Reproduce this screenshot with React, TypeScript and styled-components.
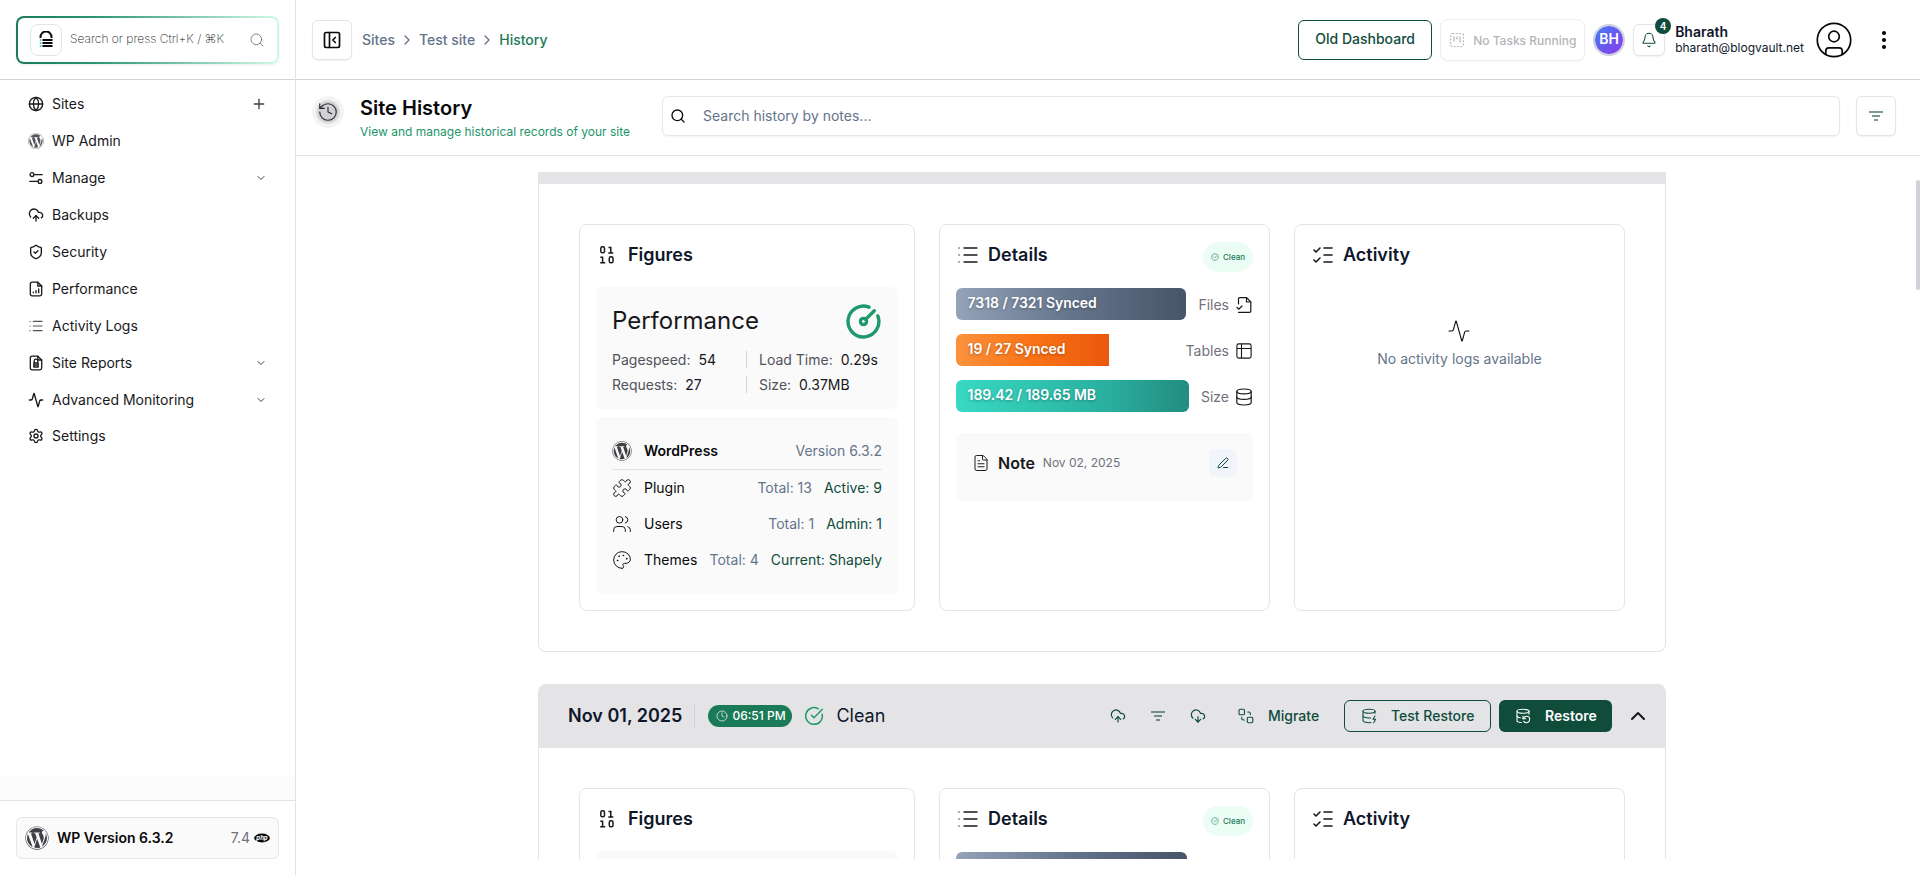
import React from 'react';
import styled, { createGlobalStyle, css } from 'styled-components';
import {
  Globe, Plus, ChevronDown, ChevronRight, ChevronUp, CloudUpload, CloudDownload, ShieldCheck, List,
  Activity, Settings, Search, PanelLeftClose, Bell, History, CircleGauge, Puzzle, Users, Palette,
  ListChecks, FileText, Database, PenLine, Clock, CircleCheckBig, DatabaseZap, DatabaseBackup,
  EllipsisVertical,
} from 'lucide-react';
import { FaWordpress } from 'react-icons/fa';

const Global = createGlobalStyle`
  *, *::before, *::after { box-sizing: border-box; }
  body { margin: 0; background: #fff; font-family: Inter, "Liberation Sans", sans-serif; font-size: 14px; line-height: 20px; color: #09090b; -webkit-font-smoothing: antialiased; }
  button, input { font: inherit; margin: 0; }
  svg { display: block; flex: none; }
`;

const Page = styled.div`
  display: grid;
  grid-template-columns: 296px minmax(0, 1fr);
  width: 100%;
  height: 875px;
  overflow: hidden;
`;

const Sidebar = styled.aside`
  display: flex;
  flex-direction: column;
  border-right: 1px solid #e2e2ea;
`;
const SearchArea = styled.div`
  height: 80px;
  padding: 16px;
  border-bottom: 1px solid #d4d4d8;
`;
const QuickSearch = styled.div`
  display: flex;
  align-items: center;
  height: 48px;
  padding: 0 12px;
  border: 2px solid transparent;
  border-radius: 8px;
  background: linear-gradient(#fff, #fff) padding-box, linear-gradient(90deg, #1b7a57, #2c9673 30%, #d1fae5) border-box;
  box-shadow: 0 1px 3px rgba(0, 0, 0, 0.08);
  span { flex: 1; margin: -2px 0 0 8px; font-size: 12px; font-weight: 200; color: #18181b; white-space: nowrap; }
`;
const LogoBox = styled.div`
  display: grid;
  place-items: center;
  width: 32px;
  height: 32px;
  border: 1px solid #e4e4e7;
  border-radius: 8px;
`;
const Nav = styled.nav`
  flex: 1;
  padding: 5px 24px 0 28px;
  display: flex;
  flex-direction: column;
`;
const NavItem = styled.a<{ $last?: boolean }>`
  display: flex;
  align-items: center;
  height: ${(p) => (p.$last ? 36 : 37)}px;
  gap: 8px;
  color: #18181b;
  span { flex: 1; }
`;
const NavAction = styled.i`
  display: flex;
  margin-right: 4px;
  color: #3f3f46;
`;
const Fade = styled.div`
  height: 24px;
  background: #fcfcfc;
`;
const SidebarFooter = styled.div`
  height: 75px;
  padding: 16px;
  border-top: 1px solid #e4e4e7;
`;
const VersionBox = styled.div`
  display: flex;
  align-items: center;
  height: 42px;
  padding: 0 8px;
  border: 1px solid #e2e8f0;
  border-radius: 6px;
  background: #fafafa;
  color: #3f3f46;
  b { flex: 1; margin-left: 8px; font-weight: 600; color: #09090b; }
  span { margin-right: 4px; color: #71717a; }
`;

const Main = styled.main`
  display: flex;
  flex-direction: column;
  min-width: 0;
  height: 875px;
`;
const TopBar = styled.header`
  display: flex;
  align-items: center;
  height: 80px;
  flex: none;
  padding: 0 24px 0 16px;
  border-bottom: 1px solid #d4d4d8;
`;
const IconButton = styled.button<{ $size: number; $tone?: string }>`
  position: relative;
  display: grid;
  place-items: center;
  flex: none;
  width: ${(p) => p.$size}px;
  height: ${(p) => p.$size}px;
  padding: 0;
  border: 1px solid #e4e4e7;
  border-radius: 6px;
  background: #fff;
  color: ${(p) => p.$tone ?? '#09090b'};
  box-shadow: 0 1px 2px rgba(0, 0, 0, 0.06);
`;
const Crumbs = styled.div`
  display: flex;
  align-items: center;
  flex: 1;
  margin-left: 10px;
  font-weight: 500;
  color: #64748b;
  svg { margin: 0 4px; }
  b { font-weight: 500; color: #1b7a57; }
`;
const OutlineButton = styled.button`
  width: 134px;
  height: 40px;
  border: 1px solid #0f4c3a;
  border-radius: 6px;
  background: #fff;
  color: #0f4c3a;
  font-weight: 500;
  padding: 0 0 2px;
`;
const TaskButton = styled.button`
  display: flex;
  align-items: center;
  gap: 8px;
  width: 145px;
  height: 42px;
  margin: 0 8px;
  padding: 0 0 0 8px;
  border: 1px solid #eeeeef;
  border-radius: 8px;
  background: #fff;
  color: #b4b4b8;
  font-size: 12px;
  font-weight: 500;
  white-space: nowrap;
  box-shadow: 0 1px 2px rgba(0, 0, 0, 0.04);
  span { padding-top: 3px; }
`;
const Initials = styled.div`
  display: grid;
  place-items: center;
  width: 32px;
  height: 32px;
  margin-right: 8px;
  padding-bottom: 2px;
  border: 2px solid #cbd0dc;
  border-radius: 50%;
  background: linear-gradient(135deg, #3b82f6, #9333ea) border-box;
  background-clip: padding-box;
  color: #fff;
  font-weight: 600;
`;
const Badge = styled.span`
  position: absolute;
  top: -7px;
  right: -7px;
  width: 16px;
  height: 16px;
  border-radius: 50%;
  background: #0f4c3a;
  color: #fff;
  font-size: 10px;
  line-height: 16px;
  font-weight: 600;
  text-align: center;
`;
const Account = styled.div`
  margin: 0 12px 0 10px;
  font-size: 12px;
  line-height: 16px;
  color: #0f172a;
  b { display: block; font-size: 14px; font-weight: 600; }
`;
const MenuDots = styled.div`
  margin-left: 20px;
`;

const TitleBar = styled.section`
  display: flex;
  flex: none;
  height: 76px;
  padding: 16px 24px 0 16px;
  border-bottom: 1px solid #e4e4e7;
`;
const TitleIcon = styled.div`
  display: grid;
  place-items: center;
  width: 32px;
  height: 32px;
  border-radius: 50%;
  background: radial-gradient(circle, #d0d0d5 0 10px, #dedee2 11px, #f4f4f5 13px);
  color: #27272a;
`;
const TitleText = styled.div`
  width: 302px;
  margin: -2px 0 0 16px;
  h1 { margin: 0; font-size: 20px; line-height: 28px; font-weight: 600; color: #09090b; }
  p { margin: 2px 0 0; font-size: 12px; line-height: 16px; color: #1b9569; }
`;
const SearchField = styled.div`
  display: flex;
  align-items: center;
  flex: 1;
  height: 40px;
  margin-right: 16px;
  padding-left: 7px;
  gap: 17px;
  border: 1px solid #e2e8f0;
  border-radius: 6px;
  color: #64748b;
  box-shadow: 0 1px 2px rgba(0, 0, 0, 0.05);
  svg { color: #09090b; }
`;

const Scroller = styled.div`
  display: flex;
  flex-direction: column;
  align-items: center;
  justify-content: flex-start;
  gap: 32px;
  position: relative;
  height: 687px;
  margin-top: 16px;
  padding-right: 12px;
  overflow: hidden;
`;
const ScrollThumb = styled.div`
  position: absolute;
  right: 0;
  top: 8px;
  width: 4px;
  height: 110px;
  border-radius: 2px;
  background: #cfd1db;
`;
const Record = styled.article<{ $cut?: boolean }>`
  flex: none;
  width: 1128px;
  border: 1px solid #e4e4e7;
  border-top: 0;
  border-radius: ${(p) => (p.$cut ? '0 0 8px 8px' : '8px')};
  overflow: hidden;
`;
const RecordHead = styled.div<{ $cut?: boolean }>`
  display: flex;
  align-items: center;
  height: ${(p) => (p.$cut ? 12 : 64)}px;
  margin: 0 -1px;
  padding: 0 16px 0 30px;
  background: #e4e4e7;
  color: #0f172a;
  font-size: 18px;
  line-height: 24px;
`;
const DateText = styled.span`
  padding-right: 12px;
  border-right: 1px solid #d2d2d6;
  font-weight: 600;
`;
const TimePill = styled.span`
  display: flex;
  align-items: center;
  gap: 4px;
  width: 84px;
  height: 22px;
  margin: 0 12px 0 13px;
  padding-left: 8px;
  border-radius: 11px;
  background: #1b7a57;
  color: #fff;
  font-size: 12px;
  font-weight: 500;
  white-space: nowrap;
`;
const CleanText = styled.span`
  flex: 1;
  margin-left: 12px;
`;
const HeadIcons = styled.div`
  display: flex;
  gap: 24px;
  margin-right: 32px;
  color: #0f4c3a;
`;
const Action = styled.button<{ $kind: 'plain' | 'outline' | 'solid'; $w: number }>`
  display: flex;
  align-items: center;
  width: ${(p) => p.$w}px;
  height: 32px;
  gap: 14px;
  padding: 0 0 0 17px;
  border: 0;
  border-radius: 6px;
  background: none;
  color: #0f4c3a;
  font-size: 14px;
  font-weight: 500;
  white-space: nowrap;
  ${(p) => p.$kind === 'plain' && css`padding-left: 0;`}
  ${(p) => p.$kind === 'outline' && css`padding-left: 16px; border: 1px solid #0f4c3a;`}
  ${(p) => p.$kind === 'solid' && css`margin: 0 14px 0 8px; padding-left: 16px; background: #0f4c3a; color: #fff; font-weight: 600;`}
`;

const Columns = styled.div`
  display: grid;
  grid-template-columns: 336px 331px 331px;
  gap: 24px;
  padding: 40px;
`;
const Card = styled.section`
  height: 387px;
  padding: 16px;
  border: 1px solid #e4e4e7;
  border-radius: 8px;
  background: #fff;
`;
const CardHead = styled.div<{ $gap: number }>`
  display: flex;
  align-items: center;
  height: 28px;
  gap: ${(p) => p.$gap}px;
  color: #18181b;
  h2 { flex: 1; margin: 0; font-size: 18px; line-height: 28px; font-weight: 600; color: #0f172a; }
`;
const Indent = styled.span`
  margin-left: 3px;
`;
const Panel = styled.div<{ $h: number; $mt: number; $pt: number }>`
  height: ${(p) => p.$h}px;
  margin-top: ${(p) => p.$mt}px;
  padding: ${(p) => p.$pt}px 16px 0;
  border-radius: 6px;
  background: #fafafa;
`;
const PerfTitle = styled.div`
  display: flex;
  align-items: center;
  justify-content: space-between;
  height: 36px;
  font-size: 24px;
  line-height: 32px;
  color: #18181b;
  svg { color: #1f996b; }
`;
const Metrics = styled.div`
  display: grid;
  grid-template-columns: 134px 1fr;
  grid-auto-rows: 17px;
  row-gap: 8px;
  margin-top: 12px;
`;
const Metric = styled.div`
  display: flex;
  align-items: center;
  gap: 8px;
  color: #52525b;
  white-space: nowrap;
  b { font-weight: 400; color: #18181b; }
  &:nth-child(even) { padding-left: 12px; border-left: 1px solid #d4d4d8; }
`;
const StackRow = styled.div<{ $head?: boolean }>`
  display: flex;
  align-items: center;
  height: 36px;
  color: #18181b;
  ${(p) => p.$head && css`height: 39px; padding-top: 1px; border-bottom: 1px solid #e4e4e7;`}
  strong { flex: 1; margin-left: 12px; font-weight: ${(p) => (p.$head ? 600 : 400)}; color: #09090b; }
  span { color: #64748b; }
  em { margin-left: 12px; font-style: normal; color: #0f4c3a; }
`;
const CleanPill = styled.div`
  display: flex;
  align-items: center;
  gap: 4px;
  width: 50px;
  height: 30px;
  margin-top: 3px;
  padding-left: 8px;
  border-radius: 15px;
  background: #ecfdf5;
  color: #1b7a57;
  font-size: 8px;
  font-weight: 500;
`;
const Bars = styled.div`
  margin-top: 19px;
`;
const BarRow = styled.div`
  display: flex;
  align-items: center;
  height: 32px;
  margin-bottom: 14px;
  color: #71717a;
  svg { margin: 2px 1px 0 7px; color: #18181b; }
  label { padding: 2px 0 0 12px; }
`;
const Track = styled.div`
  flex: 1;
  height: 32px;
  border-radius: 6px;
  overflow: hidden;
`;
const tones = {
  slate: 'linear-gradient(90deg, #94a3b8, #64748b 50%, #475569)',
  orange: 'linear-gradient(90deg, #fb923c, #f97316 50%, #ea580c)',
  teal: 'linear-gradient(90deg, #38d9c3, #2bb3a2 60%, #238d82)',
};
const Fill = styled.div<{ $tone: keyof typeof tones }>`
  height: 32px;
  padding-left: 11.5px;
  line-height: 30px;
  background: ${(p) => tones[p.$tone]};
  color: #fff;
  font-weight: 600;
  letter-spacing: -0.003em;
  text-shadow: 0 1px 3px rgba(0, 0, 0, 0.3);
  white-space: nowrap;
`;
const FillPeek = styled.div`
  width: 231px;
  height: 32px;
  margin-top: 19px;
  border-radius: 6px;
  background: ${tones.slate};
`;
const NoteRow = styled.div`
  display: flex;
  align-items: center;
  height: 28px;
  color: #18181b;
  h3 { margin: 0 8px; font-size: 16px; font-weight: 600; }
  time { flex: 1; font-size: 12px; color: #71717a; }
`;
const EditButton = styled.button`
  display: grid;
  place-items: center;
  width: 28px;
  height: 28px;
  padding: 0;
  border: 0;
  border-radius: 6px;
  background: #f1f5f9;
  color: #0f4c3a;
`;
const Empty = styled.div`
  display: flex;
  flex-direction: column;
  align-items: center;
  gap: 6px;
  margin-top: 50px;
  color: #64748b;
  svg { margin-right: 2px; color: #09090b; }
`;

const LogoMark = () => (
  <svg width="14" height="18" viewBox="0 0 14 18" fill="none">
    <path d="M1.5 7V6a5.5 5.5 0 0 1 11 0v1" stroke="#09090b" strokeWidth="2" />
    <path d="M3.5 9h10M3.5 12h10M3.5 15h10" stroke="#09090b" strokeWidth="2" />
    <path d="M.8 9h1.6M.8 12h1.6M.8 15h1.6" stroke="#2bb3a2" strokeWidth="1.6" />
  </svg>
);
const FilterLines = ({ width = 2 }: { width?: number }) => (
  <svg width="16" height="16" viewBox="0 0 16 16" stroke="currentColor" strokeWidth={width} opacity=".55">
    <path d="M1 4h14M4 8h8M6 12h4" />
  </svg>
);
const ReportIcon = ({ kind }: { kind: 'chart' | 'lock' }) => (
  <svg width="16" height="16" viewBox="0 0 16 16" fill="none" stroke="currentColor" strokeWidth="1.3" strokeLinecap="round" strokeLinejoin="round">
    <path d="M9.8 1.2H4A1.7 1.7 0 0 0 2.3 2.9v10.2A1.7 1.7 0 0 0 4 14.8h8a1.7 1.7 0 0 0 1.7-1.7V5z" />
    <path d="M9.8 1.2V5h3.9" />
    {kind === 'chart'
      ? <path d="M5.3 11.8v-.7M8 11.8V9.6M10.7 11.8V8" />
      : <path d="M6.2 7.5V6a1.8 1.8 0 0 1 3.6 0v1.5M5.8 8h4.4v4H5.8zM5.8 10h4.4" />}
  </svg>
);
const ManageIcon = () => (
  <svg width="16" height="16" viewBox="0 0 16 16" fill="none" stroke="currentColor" strokeWidth="1.3" strokeLinecap="round">
    <circle cx="4" cy="4.6" r="1.9" /><path d="M6.5 4.6h7.8" />
    <circle cx="12" cy="11.4" r="1.9" /><path d="M1.8 11.4h7.8" />
  </svg>
);
const BinaryIcon = () => (
  <svg width="16" height="20" viewBox="0 0 16 20" fill="none" stroke="currentColor" strokeWidth="1.5">
    <rect x="1.8" y="1.8" width="3.7" height="6" rx="1.6" />
    <path d="M9.5 2.500h2.300v5.700M9.300 8h5M1.300 12.200h2.300v5.600M1.200 17.700h5" />
    <rect x="10.300" y="11.800" width="3.700" height="6" rx="1.600" />
  </svg>
);
const FileCheckIcon = () => (
  <svg width="16" height="16" viewBox="0 0 16 16" fill="none" stroke="currentColor" strokeWidth="1.2" strokeLinecap="round" strokeLinejoin="round">
    <path d="M2.500 7V1.800c0-.7.400-1.100 1.100-1.100h7L14.800 5v9c0 .8-.5 1.300-1.300 1.300H2.500" />
    <path d="M10.500.8V5h4.200M1 10.500l1.700 1.700L6 9" />
  </svg>
);
const GridIcon = () => (
  <svg width="16" height="16" viewBox="0 0 16 16" fill="none" stroke="currentColor" strokeWidth="1.1">
    <rect x=".9" y=".9" width="14.200" height="14.200" rx="1.800" />
    <path d="M5.500 1v14M1 5.500h14" />
  </svg>
);
const MigrateIcon = () => (
  <svg width="16" height="16" viewBox="0 0 16 16" fill="none" stroke="currentColor" strokeWidth="1.1" strokeLinecap="round">
    <rect x="1" y="1.200" width="5.500" height="5.500" rx="1.200" />
    <rect x="9.300" y="9.300" width="5.500" height="5.500" rx="1.200" />
    <path d="M9.800 4h.8a1.800 1.800 0 0 1 1.800 1.800v.7M6.300 12h-.8a1.800 1.800 0 0 1-1.800-1.800v-.8" />
  </svg>
);
const UserIcon = () => (
  <svg width="36" height="36" viewBox="0 0 36 36" fill="none" stroke="currentColor" strokeWidth="1.7">
    <circle cx="18" cy="18" r="16.700" />
    <circle cx="18" cy="14.500" r="5.300" />
    <path d="M9.800 32v-3.200a3 3 0 0 1 3-3h10.400a3 3 0 0 1 3 3V32" />
  </svg>
);
const TaskIcon = () => (
  <svg width="16" height="16" viewBox="0 0 16 16" fill="none" stroke="currentColor" strokeWidth="1.2">
    <rect x="1.500" y="1.500" width="13" height="13" rx="2" strokeDasharray="1.800 1.500" />
    <path d="M5 4.500v5M8 4.500v3M11 4.500v6" />
  </svg>
);
const PhpIcon = () => (
  <svg width="16" height="10" viewBox="0 0 16 10">
    <ellipse cx="8" cy="5" rx="7.900" ry="4.400" fill="#09090b" />
    <text x="8" y="6.800" textAnchor="middle" fontSize="6" fontWeight="700" fontStyle="italic" fill="#fff">php</text>
  </svg>
);

const navItems = [
  { label: 'Sites', icon: <Globe size={16} />, action: 'plus' },
  { label: 'WP Admin', icon: <FaWordpress size={16} color="#52525b" /> },
  { label: 'Manage', icon: <ManageIcon />, action: 'chevron' },
  { label: 'Backups', icon: <CloudUpload size={16} /> },
  { label: 'Security', icon: <ShieldCheck size={16} /> },
  { label: 'Performance', icon: <ReportIcon kind="chart" /> },
  { label: 'Activity Logs', icon: <List size={16} strokeWidth={1.8} color="#52525b" /> },
  { label: 'Site Reports', icon: <ReportIcon kind="lock" />, action: 'chevron' },
  { label: 'Advanced Monitoring', icon: <Activity size={16} />, action: 'chevron' },
  { label: 'Settings', icon: <Settings size={16} /> },
];

const stack = [
  { name: 'Plugin', icon: <Puzzle size={20} strokeWidth={1.2} />, total: 'Total: 13', extra: 'Active: 9' },
  { name: 'Users', icon: <Users size={20} strokeWidth={1.2} />, total: 'Total: 1', extra: 'Admin: 1' },
  { name: 'Themes', icon: <Palette size={20} strokeWidth={1.2} />, total: 'Total: 4', extra: 'Current: Shapely' },
];

const bars: { label: string; text: string; done: number; all: number; tone: keyof typeof tones; icon: React.ReactNode }[] = [
  { label: 'Files', text: '7318 / 7321 Synced', done: 7318, all: 7321, tone: 'slate', icon: <FileCheckIcon /> },
  { label: 'Tables', text: '19 / 27 Synced', done: 19, all: 27, tone: 'orange', icon: <GridIcon /> },
  { label: 'Size', text: '189.42 / 189.65 MB', done: 189.42, all: 189.65, tone: 'teal', icon: <Database strokeWidth={1.5} viewBox="2 1 20 22" width={16} height={18} /> },
];

const FiguresBody = () => (
  <>
    <Panel $h={122} $mt={18} $pt={16}>
      <PerfTitle>Performance<CircleGauge size={37} strokeWidth={2.2} /></PerfTitle>
      <Metrics>
        <Metric>Pagespeed: <b>54</b></Metric>
        <Metric>Load Time: <b>0.29s</b></Metric>
        <Metric>Requests: <b>27</b></Metric>
        <Metric>Size: <b>0.37MB</b></Metric>
      </Metrics>
    </Panel>
    <Panel $h={177} $mt={8} $pt={14}>
      <StackRow $head>
        <FaWordpress size={20} color="#3f3f46" />
        <strong>WordPress</strong>
        <span>Version 6.3.2</span>
      </StackRow>
      {stack.map((s) => (
        <StackRow key={s.name}>
          {s.icon}
          <strong>{s.name}</strong>
          <span>{s.total}</span>
          <em>{s.extra}</em>
        </StackRow>
      ))}
    </Panel>
  </>
);

const DetailsBody = () => (
  <>
    <Bars>
      {bars.map((b) => (
        <BarRow key={b.label}>
          <Track>
            <Fill $tone={b.tone} style={{ width: `${(b.done / b.all) * 100}%` }}>{b.text}</Fill>
          </Track>
          <label>{b.label}</label>
          {b.icon}
        </BarRow>
      ))}
    </Bars>
    <Panel $h={68} $mt={21} $pt={16}>
      <NoteRow>
        <FileText size={18} strokeWidth={1.3} />
        <h3>Note</h3>
        <time>Nov 02, 2025</time>
        <EditButton><PenLine size={12} /></EditButton>
      </NoteRow>
    </Panel>
  </>
);

const RecordBody = ({ peek }: { peek?: boolean }) => (
  <Columns>
    <Card>
      <CardHead $gap={13}>
        <Indent><BinaryIcon /></Indent>
        <h2>Figures</h2>
      </CardHead>
      {peek ? <Panel $h={122} $mt={18} $pt={16} /> : <FiguresBody />}
    </Card>
    <Card>
      <CardHead $gap={8}>
        <List size={24} strokeWidth={1.3} />
        <h2>Details</h2>
        <CleanPill><CircleCheckBig size={8} strokeWidth={1.8} />Clean</CleanPill>
      </CardHead>
      {peek ? <FillPeek /> : <DetailsBody />}
    </Card>
    <Card>
      <CardHead $gap={8}>
        <ListChecks size={24} strokeWidth={1.6} />
        <h2>Activity</h2>
      </CardHead>
      {!peek && (
        <Empty>
          <Activity size={24} strokeWidth={1.1} />
          No activity logs available
        </Empty>
      )}
    </Card>
  </Columns>
);

export default function App() {
  return (
    <>
      <Global />
      <Page>
        <Sidebar>
          <SearchArea>
            <QuickSearch>
              <LogoBox><LogoMark /></LogoBox>
              <span>Search or press Ctrl+K / ⌘K</span>
              <Search size={16} strokeWidth={1.3} color="#71717a" />
            </QuickSearch>
          </SearchArea>
          <Nav>
            {navItems.map((n) => (
              <NavItem key={n.label} $last={n.label === 'Settings'}>
                {n.icon}
                <span>{n.label}</span>
                {n.action === 'plus' && <NavAction><Plus size={16} /></NavAction>}
                {n.action === 'chevron' && <NavAction><ChevronDown size={12} /></NavAction>}
              </NavItem>
            ))}
          </Nav>
          <Fade />
          <SidebarFooter>
            <VersionBox>
              <FaWordpress size={24} />
              <b>WP Version 6.3.2</b>
              <span>7.4</span>
              <PhpIcon />
            </VersionBox>
          </SidebarFooter>
        </Sidebar>
        <Main>
          <TopBar>
            <IconButton $size={40}><PanelLeftClose size={20} /></IconButton>
            <Crumbs>
              Sites<ChevronRight size={16} />Test site<ChevronRight size={16} /><b>History</b>
            </Crumbs>
            <OutlineButton>Old Dashboard</OutlineButton>
            <TaskButton><TaskIcon /><span>No Tasks Running</span></TaskButton>
            <Initials>BH</Initials>
            <IconButton $size={32} $tone="#0f4c3a">
              <Bell size={16} strokeWidth={1.6} />
              <Badge>4</Badge>
            </IconButton>
            <Account><b>Bharath</b>bharath@blogvault.net</Account>
            <UserIcon />
            <MenuDots><EllipsisVertical size={24} strokeWidth={2.2} /></MenuDots>
          </TopBar>
          <TitleBar>
            <TitleIcon><History size={22} strokeWidth={1.2} /></TitleIcon>
            <TitleText>
              <h1>Site History</h1>
              <p>View and manage historical records of your site</p>
            </TitleText>
            <SearchField><Search size={16} />Search history by notes...</SearchField>
            <IconButton $size={40} $tone="#0f4c3a"><FilterLines /></IconButton>
          </TitleBar>
          <Scroller>
            <Record $cut>
              <RecordHead $cut />
              <RecordBody />
            </Record>
            <Record>
              <RecordHead>
                <DateText>Nov 01, 2025</DateText>
                <TimePill><Clock size={12} strokeWidth={1.4} />06:51 PM</TimePill>
                <CircleCheckBig size={20} strokeWidth={1.8} color="#1f996b" />
                <CleanText>Clean</CleanText>
                <HeadIcons>
                  <CloudUpload size={16} strokeWidth={1.8} />
                  <FilterLines />
                  <CloudDownload size={16} strokeWidth={1.8} />
                </HeadIcons>
                <Action $kind="plain" $w={106}><MigrateIcon />Migrate</Action>
                <Action $kind="outline" $w={147}><DatabaseZap size={16} strokeWidth={1.6} />Test Restore</Action>
                <Action $kind="solid" $w={113}><DatabaseBackup size={16} strokeWidth={1.6} />Restore</Action>
                <ChevronUp size={24} color="#18181b" />
              </RecordHead>
              <RecordBody peek />
            </Record>
            <ScrollThumb />
          </Scroller>
        </Main>
      </Page>
    </>
  );
}
